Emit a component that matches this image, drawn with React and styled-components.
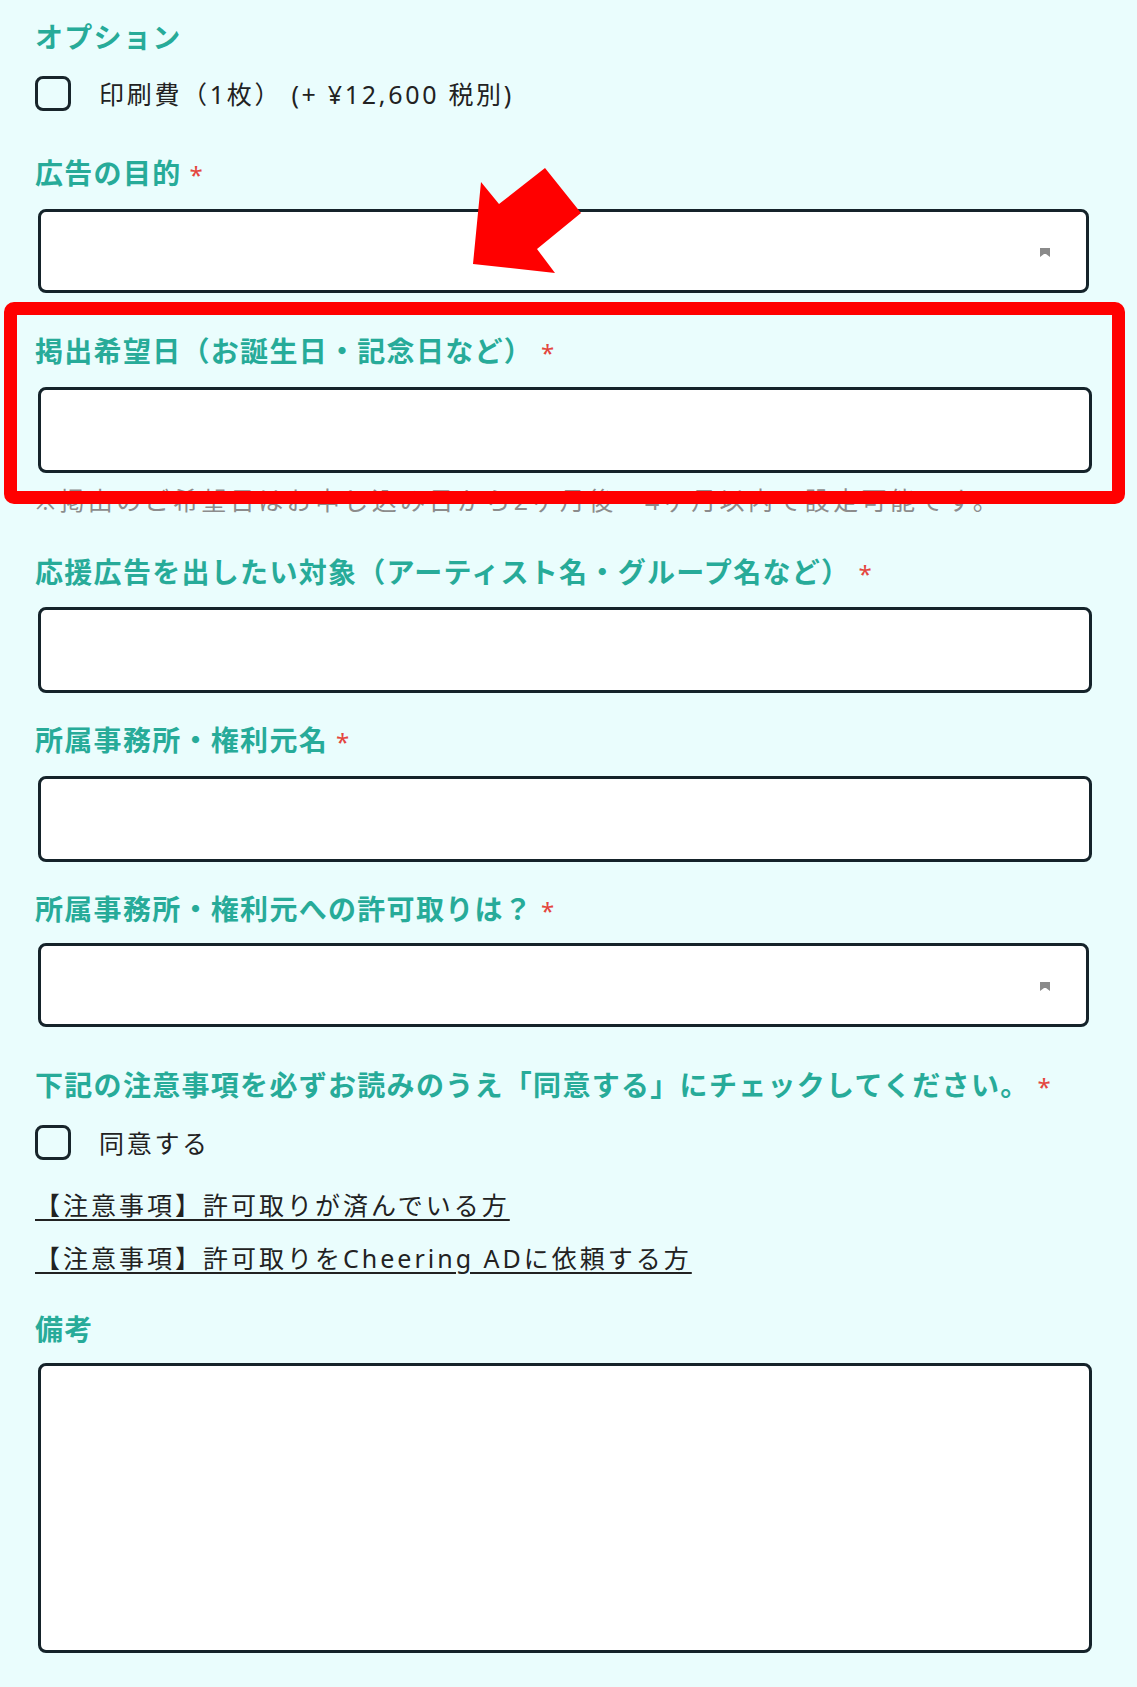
import React from 'react'
import { styled, createGlobalStyle } from 'styled-components'

const GlobalStyle = createGlobalStyle`
  html, body {
    margin: 0;
    padding: 0;
    background: #eafdfd;
  }
  * { box-sizing: border-box; }
`

const Page = styled.div`
  position: relative;
  width: 1137px;
  min-height: 1687px;
  padding: 16px 45px 30px 35px;
  background: #eafdfd;
  font-family: "Noto Sans", "Noto Sans CJK JP", sans-serif;
`

const Label = styled.div`
  margin-top: ${p => p.$mt || 0}px;
  height: 40px;
  line-height: 40px;
  font-family: "Noto Sans CJK JP", "Noto Sans", sans-serif;
  font-weight: 700;
  font-size: 28px;
  letter-spacing: 1.3px;
  color: #27ab99;
  white-space: nowrap;
`

const Req = styled.span`
  margin-left: 8px;
  font-family: "Noto Sans", sans-serif;
  font-weight: 400;
  font-size: 24px;
  color: #e4463e;
`

const CheckRow = styled.label`
  margin-top: ${p => p.$mt || 0}px;
  display: flex;
  align-items: center;
  gap: 28px;
  height: 36px;
  font-size: 25px;
  letter-spacing: 2.7px;
  color: #222;
  white-space: pre;
`

const Box = styled.span`
  width: 36px;
  height: 35px;
  border: 3px solid #18252b;
  border-radius: 8px;
  background: transparent;
  flex: none;
`

const Control = styled.div`
  position: relative;
  margin-top: ${p => p.$mt || 0}px;
  margin-left: 3px;
  width: ${p => (p.$select ? 1051 : 1054)}px;
  height: ${p => p.$h}px;
  background: #fff;
  border: 3px solid #15232a;
  border-radius: 8px;
  display: flex;
  align-items: center;
  justify-content: flex-end;
  padding-right: 36px;
`

const Caret = styled.svg`
  width: 10px;
  height: 9px;
  margin-top: 2px;
`

const Help = styled.div`
  margin-top: 9px;
  height: 36px;
  line-height: 36px;
  font-size: 25px;
  letter-spacing: 3.4px;
  color: #8c8c8c;
  white-space: nowrap;
`

const Link = styled.a`
  display: block;
  width: max-content;
  margin-top: ${p => p.$mt}px;
  height: 36px;
  line-height: 36px;
  font-size: 25px;
  letter-spacing: 3px;
  color: #222;
  text-decoration: underline;
  text-decoration-thickness: 2px;
  text-underline-offset: 4px;
  white-space: nowrap;
`

const Highlight = styled.div`
  position: absolute;
  left: 4px;
  top: 302px;
  width: 1121px;
  height: 202px;
  border: 13px solid #ff0000;
  border-radius: 10px;
  pointer-events: none;
`

const Arrow = styled.svg`
  position: absolute;
  left: 470px;
  top: 165px;
  width: 115px;
  height: 112px;
`

function Field({ children }) {
  return children
}

function SelectBox({ mt }) {
  return (
    <Control $select $mt={mt} $h={84}>
      <Caret viewBox="0 0 10 9">
        <polygon points="0,0 10,0 10,9 6,6 4,6 0,9" fill="#8a8a8a" />
      </Caret>
    </Control>
  )
}

export default function App() {
  return (
    <>
      <GlobalStyle />
      <Page>
        <Label>オプション</Label>
        <CheckRow $mt={19}>
          <Box />
          <span>印刷費（1枚） (+ ¥12,600 税別)</span>
        </CheckRow>

        <Field>
          <Label $mt={41}>広告の目的<Req>*</Req></Label>
          <SelectBox mt={17} />
        </Field>

        <Field>
          <Label $mt={37}>掲出希望日（お誕生日・記念日など）<Req>*</Req></Label>
          <Control $mt={17} $h={86} />
          <Help>※掲出のご希望日はお申し込み日から2ヶ月後〜4ヶ月以内で設定可能です。</Help>
        </Field>

        <Field>
          <Label $mt={33}>応援広告を出したい対象（アーティスト名・グループ名など）<Req>*</Req></Label>
          <Control $mt={16} $h={86} />
        </Field>

        <Field>
          <Label $mt={26}>所属事務所・権利元名<Req>*</Req></Label>
          <Control $mt={17} $h={86} />
        </Field>

        <Field>
          <Label $mt={26}>所属事務所・権利元への許可取りは？<Req>*</Req></Label>
          <SelectBox mt={15} />
        </Field>

        <Field>
          <Label $mt={37}>下記の注意事項を必ずお読みのうえ「同意する」にチェックしてください。<Req>*</Req></Label>
          <CheckRow $mt={20}>
            <Box />
            <span>同意する</span>
          </CheckRow>
          <Link $mt={27}>【注意事項】許可取りが済んでいる方</Link>
          <Link $mt={17}>【注意事項】許可取りをCheering ADに依頼する方</Link>
        </Field>

        <Field>
          <Label $mt={32}>備考</Label>
          <Control $mt={15} $h={290} />
        </Field>

        <Highlight />
        <Arrow viewBox="0 0 115 112">
          <polygon points="3,99 11,17 29,39 75,3 111,48 67,84 85,108" fill="#ff0000" />
        </Arrow>
      </Page>
    </>
  )
}
